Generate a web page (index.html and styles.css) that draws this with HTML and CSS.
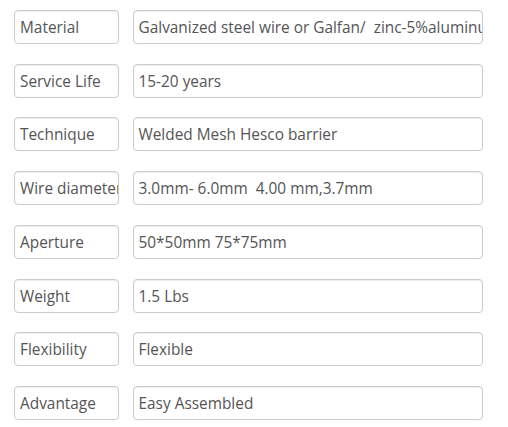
FILE: index.html
```html
<!DOCTYPE html>
<html>
<head>
<meta charset="utf-8">
<link rel="stylesheet" href="styles.css">
</head>
<body>
<div class="list">
  <div class="row"><div class="label">Material</div><div class="value">Galvanized steel wire or Galfan/&nbsp; zinc-5%aluminum</div></div>
  <div class="row"><div class="label">Service Life</div><div class="value">15-20 years</div></div>
  <div class="row"><div class="label">Technique</div><div class="value">Welded Mesh Hesco barrier</div></div>
  <div class="row"><div class="label">Wire diameter</div><div class="value">3.0mm- 6.0mm&nbsp; 4.00 mm,3.7mm</div></div>
  <div class="row"><div class="label">Aperture</div><div class="value">50*50mm 75*75mm</div></div>
  <div class="row"><div class="label">Weight</div><div class="value">1.5 Lbs</div></div>
  <div class="row"><div class="label">Flexibility</div><div class="value">Flexible</div></div>
  <div class="row"><div class="label">Advantage</div><div class="value">Easy Assembled</div></div>
</div>
</body>
</html>
```
FILE: styles.css
```css
html, body { margin: 0; padding: 0; background: #fff; }
.list {
  padding: 10px 0 0 14px;
  display: flex;
  flex-direction: column;
  gap: 19.71px;
  font-family: "Open Sans", "Noto Sans", sans-serif;
  font-size: 15.4px;
  color: #555;
}
.row { display: flex; gap: 14px; height: 34px; }
.label, .value {
  box-sizing: border-box;
  height: 34px;
  border: 1px solid #ccc;
  border-radius: 4px;
  padding: 2px 5px 0;
  line-height: 30px;
  white-space: nowrap;
  overflow: hidden;
  box-shadow: inset 0 1px 1px rgba(0,0,0,0.075);
}
.label { width: 104.5px; flex: none; }
.value { width: 350px; flex: none; }
```
